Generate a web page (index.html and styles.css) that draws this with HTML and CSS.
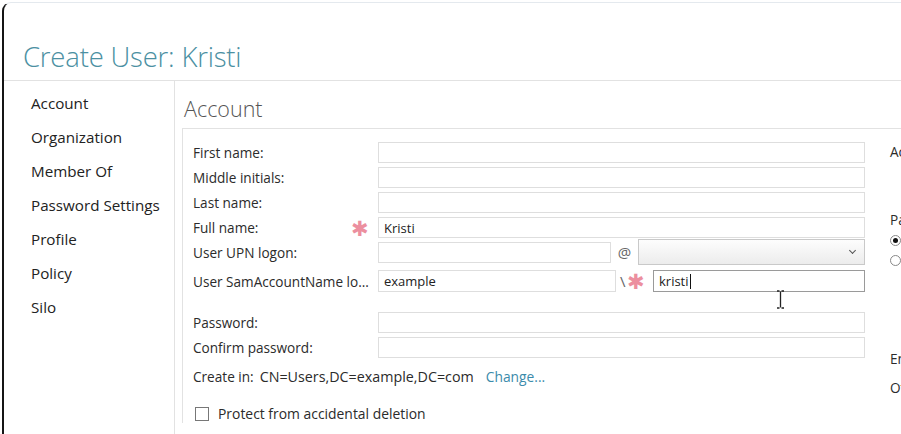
FILE: index.html
```html
<!DOCTYPE html>
<html lang="en">
<head>
    <meta charset="UTF-8">
    <meta name="viewport" content="width=device-width, initial-scale=1.0">
    <title>Create User: Kristi</title>
    <link rel="stylesheet" href="styles.css">
</head>
<body>
    <div class="window">
        <header class="title-bar">
            <h1>Create User: Kristi</h1>
        </header>

        <div class="body">
            <nav class="side-nav">
                <a href="#">Account</a>
                <a href="#">Organization</a>
                <a href="#">Member Of</a>
                <a href="#">Password Settings</a>
                <a href="#">Profile</a>
                <a href="#">Policy</a>
                <a href="#">Silo</a>
            </nav>

            <main class="content">
                <h2>Account</h2>
                <div class="panel">
                    <div class="form">
                        <div class="row">
                            <label>First name:</label>
                            <input type="text">
                        </div>
                        <div class="row">
                            <label>Middle initials:</label>
                            <input type="text">
                        </div>
                        <div class="row">
                            <label>Last name:</label>
                            <input type="text">
                        </div>
                        <div class="row">
                            <label>Full name: <span class="req">✱</span></label>
                            <input type="text" value="Kristi">
                        </div>
                        <div class="row upn">
                            <label>User UPN logon:</label>
                            <input type="text" class="upn-name">
                            <span class="sep">@</span>
                            <div class="select"><span class="chev"></span></div>
                        </div>
                        <div class="row sam">
                            <label>User SamAccountName lo...</label>
                            <input type="text" class="sam-domain" value="example">
                            <span class="sep slash">\<span class="req">✱</span></span>
                            <div class="field focused">kristi<span class="caret"></span></div>
                        </div>

                        <div class="row pw">
                            <label>Password:</label>
                            <input type="password">
                        </div>
                        <div class="row">
                            <label>Confirm password:</label>
                            <input type="password">
                        </div>

                        <div class="create-in">
                            <span>Create in:</span>
                            <span class="dn">CN=Users,DC=example,DC=com</span>
                            <a href="#">Change...</a>
                        </div>

                        <label class="check">
                            <span class="box"></span>
                            Protect from accidental deletion
                        </label>
                    </div>

                    <div class="side-col">
                        <p class="opt">Account expires:</p>
                        <p class="opt pw-opts">Password options:</p>
                        <p class="radio"><span class="dot on"></span>User must change password at next log on</p>
                        <p class="radio"><span class="dot"></span>Other password options</p>
                        <p class="opt enc">Encryption options:</p>
                        <p class="opt other">Other encryption options</p>
                    </div>
                </div>
            </main>
        </div>

        <svg class="ibeam" width="9" height="19" viewBox="0 0 9 19">
            <path d="M1 1h2.5M5.5 1H8M4.5 1.5v16M1 18h2.5M5.5 18H8" stroke="#222" stroke-width="1.3" fill="none"/>
        </svg>
    </div>
</body>
</html>
```

FILE: styles.css
```css
body {
    margin: 0;
    background-color: #fff;
    font-family: "Open Sans", "Noto Sans", sans-serif;
    color: #2b2b2b;
    overflow: hidden;
}
.window {
    position: relative;
    height: 432px;
    margin: 2px 0 0 2px;
    border-top: 1px solid #e4e9ee;
    border-left: 2px solid #151515;
    border-top-left-radius: 9px;
    overflow: hidden;
}
.title-bar {
    height: 77px;
    border-bottom: 1px solid #e2e2e2;
}
.title-bar h1 {
    margin: 0;
    padding: 35px 0 0 19px;
    font-size: 27.5px;
    font-weight: 300;
    color: #4b90a2;
    letter-spacing: -0.2px;
}
.body {
    display: flex;
    height: 360px;
}
.side-nav {
    width: 170px;
    flex-shrink: 0;
    border-right: 1px solid #e2e2e2;
    padding-top: 12px;
    display: flex;
    flex-direction: column;
    gap: 13px;
}
.side-nav a {
    padding-left: 27px;
    font-size: 15.2px;
    line-height: 21px;
    color: #222;
    text-decoration: none;
}
.content {
    flex: 1;
    padding-left: 7px;
}
.content h2 {
    margin: 12px 0 0 2px;
    font-size: 21.5px;
    font-weight: 300;
    color: #555;
    line-height: 32px;
}
.panel {
    display: flex;
    margin-top: 3px;
    border-top: 1px solid #e2e2e2;
    border-left: 1px solid #e2e2e2;
    padding: 13px 0 0 10px;
    gap: 25px;
}
.form {
    width: 672px;
    flex-shrink: 0;
    font-size: 13.6px;
}
.row {
    display: flex;
    align-items: center;
    height: 21px;
    margin-bottom: 4px;
}
.row label {
    width: 185px;
    flex-shrink: 0;
    display: flex;
    justify-content: space-between;
    align-items: center;
    padding-right: 9px;
    box-sizing: border-box;
    white-space: nowrap;
}
.req {
    color: #ec8f9f;
    font-size: 21px;
    line-height: 18px;
}
input, .field {
    box-sizing: border-box;
    height: 21px;
    flex: 1;
    min-width: 0;
    border: 1px solid #dedede;
    padding: 0 5px;
    font-family: inherit;
    font-size: 13px;
    color: #222;
    background: #fff;
    margin: 0;
}
.row.upn {
    height: 26px;
    margin-top: -3px;
    margin-bottom: 5px;
}
.upn-name {
    flex: none;
    width: 233px;
}
.sep {
    width: 27px;
    text-align: center;
    color: #666;
    font-size: 15px;
}
.select {
    position: relative;
    flex: 1;
    height: 26px;
    box-sizing: border-box;
    border: 1px solid #c9c9c9;
    background: linear-gradient(#fdfdfd, #ececec);
}
.chev {
    position: absolute;
    right: 9px;
    top: 8px;
    width: 4px;
    height: 4px;
    border-right: 1.5px solid #555;
    border-bottom: 1.5px solid #555;
    transform: rotate(45deg);
}
.row.sam {
    height: 22px;
}
.row.sam input, .row.sam .field {
    height: 22px;
}
.sam-domain {
    flex: none;
    width: 238px;
}
.sep.slash {
    width: 37px;
    display: flex;
    align-items: center;
    padding-left: 4px;
    box-sizing: border-box;
    gap: 1px;
}
.field {
    display: flex;
    align-items: center;
}
.field.focused {
    border-color: #9a9a9a;
}
.caret {
    width: 1px;
    height: 15px;
    background: #111;
    margin-left: 1px;
}
.row.pw {
    margin-top: 20px;
}
.create-in {
    display: flex;
    gap: 6px;
    margin-top: 9px;
    line-height: 20px;
}
.create-in .dn {
    font-size: 14.3px;
}
.create-in a {
    margin-left: 6px;
    color: #3b8bab;
    text-decoration: none;
    font-size: 13.8px;
}
.check {
    display: flex;
    align-items: center;
    gap: 9px;
    margin-top: 17px;
    padding-left: 2px;
    font-size: 13.9px;
}
.box {
    width: 14px;
    height: 14px;
    border: 1px solid #777;
    box-sizing: border-box;
}
.side-col {
    white-space: nowrap;
    font-size: 13.6px;
}
.side-col p {
    margin: 0;
}
.opt {
    line-height: 20px;
}
.pw-opts {
    margin-top: 48px !important;
}
.radio {
    display: flex;
    align-items: center;
    gap: 6px;
    height: 20px;
}
.dot {
    width: 11px;
    height: 11px;
    border: 1px solid #888;
    border-radius: 50%;
    box-sizing: border-box;
    position: relative;
}
.dot.on::after {
    content: "";
    position: absolute;
    left: 2px;
    top: 2px;
    width: 5px;
    height: 5px;
    border-radius: 50%;
    background: #111;
}
.enc {
    margin-top: 79px !important;
}
.other {
    margin-top: 9px !important;
}
.ibeam {
    position: absolute;
    left: 772px;
    top: 287px;
}
```
